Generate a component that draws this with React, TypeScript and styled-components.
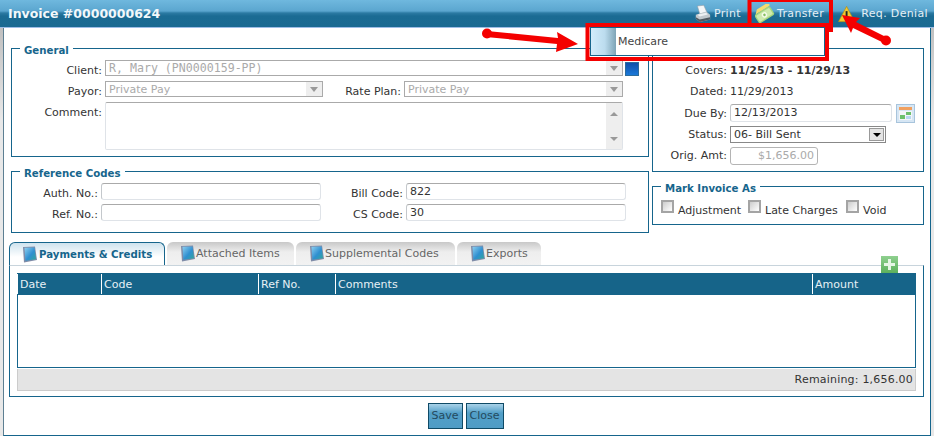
import React from "react";
import styled, { createGlobalStyle } from "styled-components";

const GlobalStyle = createGlobalStyle`
  html, body {
    margin: 0;
    padding: 0;
    background: #ffffff;
  }
  body {
    font-family: "DejaVu Sans", Verdana, sans-serif;
    font-size: 11px;
    color: #333333;
  }
`;

const TEAL = "#16658c";

const PrintIcon = () => (
  <svg width="20" height="22" viewBox="0 0 20 22">
    <path d="M3 1 L11 0 L15 9 L6 11 Z" fill="#f4f6f8" stroke="#8f9aa3" strokeWidth="0.7" />
    <path d="M1 12 L14 8 L19 12 L19 18 L6 21 L1 17 Z" fill="#c2c9ce" />
    <path d="M1 15 L6 18 L19 15 L19 18 L6 21 L1 17 Z" fill="#4f5961" />
    <path d="M3 12 L14 9.5 L16 11.5 L6 14 Z" fill="#eef1f3" />
  </svg>
);

const MoneyIcon = () => (
  <svg width="22" height="20" viewBox="0 0 22 20">
    <g transform="rotate(-32 11 10)">
      <path d="M2 5 L6 1 L22 1 L20 5 Z" fill="#f5dc70" />
      <rect x="0" y="5" width="20" height="11" rx="2" fill="#a6d67c" />
      <rect x="1.5" y="6.5" width="17" height="8" rx="1" fill="#cdeaae" />
      <circle cx="10" cy="10.5" r="3" fill="#f4fbe9" />
      <circle cx="10" cy="10.5" r="1.4" fill="#86bd61" />
    </g>
  </svg>
);

const WarningIcon = () => (
  <svg width="18" height="18" viewBox="0 0 18 18">
    <path d="M9 1 L17.5 17 L0.5 17 Z" fill="#f2c92e" stroke="#a98a1c" strokeWidth="0.7" />
    <rect x="8" y="6" width="2" height="6.5" fill="#222222" />
    <rect x="8" y="13.5" width="2" height="2" fill="#222222" />
  </svg>
);

const BookIcon = () => (
  <svg width="16" height="17" viewBox="0 0 16 17">
    <defs>
      <linearGradient id="bookFill" x1="0" y1="0" x2="1" y2="1">
        <stop offset="0" stopColor="#8fd0f0" />
        <stop offset="0.55" stopColor="#2f8fd0" />
        <stop offset="1" stopColor="#2fa89a" />
      </linearGradient>
    </defs>
    <path d="M1 1 L13 0.5 L15 14 L2 16.5 Z" fill="#7f8ca8" />
    <path d="M2.5 1.8 L12.5 1.4 L14 13.2 L3.4 14.8 Z" fill="url(#bookFill)" />
  </svg>
);

const CalendarIcon = () => (
  <svg width="19" height="19" viewBox="0 0 19 19">
    <rect x="0.5" y="0.5" width="18" height="18" fill="#d6e6f4" stroke="#a8c4dc" />
    <rect x="3" y="3" width="13" height="3" fill="#f0a060" />
    <rect x="3" y="7" width="13" height="9" fill="#f2f5f8" />
    <rect x="4" y="11" width="5" height="4" fill="#6cc06c" />
    <rect x="10" y="8" width="5" height="3" fill="#6cc06c" />
    <rect x="10" y="12" width="5" height="3" fill="#b8d8f0" />
  </svg>
);

const PlusIcon = () => (
  <svg width="17" height="17" viewBox="0 0 17 17">
    <defs>
      <linearGradient id="plusFill" x1="0" y1="0" x2="0" y2="1">
        <stop offset="0" stopColor="#8fd08f" />
        <stop offset="1" stopColor="#5cb05c" />
      </linearGradient>
    </defs>
    <rect width="17" height="17" fill="url(#plusFill)" />
    <rect x="7" y="3" width="3" height="11" fill="#e6f6e6" />
    <rect x="3" y="7" width="11" height="3" fill="#e6f6e6" />
  </svg>
);

const Annotations = () => (
  <Overlay width="934" height="436" viewBox="0 0 934 436">
    <g fill="none" stroke="#f40000" strokeWidth="4">
      <rect x="587.5" y="25" width="239.5" height="34" />
      <path d="M749.5 27 V0 H831 V32" />
    </g>
    <g fill="#f40000" stroke="none">
      <circle cx="487" cy="33.5" r="5" />
      <path d="M487 31 L558 38 L557 32 L578 44 L556 52 L557 44 L486 37 Z" />
      <circle cx="886" cy="40.5" r="5" />
      <path d="M888 38 L856 22 L860 18 L842 15 L851 33 L853 28 L884 43 Z" />
    </g>
  </Overlay>
);

const App: React.FC = () => (
  <Page>
    <GlobalStyle />
    <TitleBar>
      <Title>Invoice #0000000624</Title>
      <Toolbar>
        <ToolButton $width={46} $gap={3}>
          <PrintIcon />
          Print
        </ToolButton>
        <ToolButton $width={69} $gap={2}>
          <MoneyIcon />
          Transfer
        </ToolButton>
        <ToolButton $width={90} $gap={6}>
          <WarningIcon />
          Req. Denial
        </ToolButton>
      </Toolbar>
    </TitleBar>

    <Window>
      <TopGrid>
        <Column>
          <Group $height={118}>
            <Legend>General</Legend>
            <GeneralGrid>
              <Label>Client:</Label>
              <ClientCell>
                <Combo>
                  <ComboText $mono>R, Mary (PN0000159-PP)</ComboText>
                  <ComboArrow />
                </Combo>
              </ClientCell>
              <Swatch />
              <Label>Payor:</Label>
              <Combo>
                <ComboText>Private Pay</ComboText>
                <ComboArrow />
              </Combo>
              <Label>Rate Plan:</Label>
              <Combo>
                <ComboText>Private Pay</ComboText>
                <ComboArrow />
              </Combo>
              <span />
              <Label>Comment:</Label>
              <CommentBox>
                <CommentArea />
                <ScrollTrack>
                  <ScrollUp />
                  <ScrollDown />
                </ScrollTrack>
              </CommentBox>
            </GeneralGrid>
          </Group>

          <Group $height={71}>
            <Legend>Reference Codes</Legend>
            <CodesGrid>
              <Label>Auth. No.:</Label>
              <TextBox />
              <Label>Bill Code:</Label>
              <TextBox>822</TextBox>
              <Label>Ref. No.:</Label>
              <TextBox />
              <Label>CS Code:</Label>
              <TextBox>30</TextBox>
            </CodesGrid>
          </Group>
        </Column>

        <RightColumn>
          <InfoGroup>
            <InfoRow>
              <InfoLabel>Covers:</InfoLabel>
              <strong>11/25/13 - 11/29/13</strong>
            </InfoRow>
            <InfoRow>
              <InfoLabel>Dated:</InfoLabel>
              11/29/2013
            </InfoRow>
            <InfoRow>
              <InfoLabel>Due By:</InfoLabel>
              <DueBox>12/13/2013</DueBox>
              <CalendarSlot>
                <CalendarIcon />
              </CalendarSlot>
            </InfoRow>
            <InfoRow>
              <InfoLabel>Status:</InfoLabel>
              <StatusSelect>
                06- Bill Sent
                <StatusArrow />
              </StatusSelect>
            </InfoRow>
            <InfoRow>
              <InfoLabel>Orig. Amt:</InfoLabel>
              <AmountBox>$1,656.00</AmountBox>
            </InfoRow>
          </InfoGroup>

          <Group $height={48}>
            <Legend>Mark Invoice As</Legend>
            <MarkRow>
              <Check $width={87}>
                <CheckBox />
                Adjustment
              </Check>
              <Check $width={98}>
                <CheckBox />
                Late Charges
              </Check>
              <Check $width={50}>
                <CheckBox />
                Void
              </Check>
            </MarkRow>
          </Group>
        </RightColumn>
      </TopGrid>

      <TabSection>
        <TabStrip>
          <Tab $active $width={156}>
            <BookIcon />
            Payments &amp; Credits
          </Tab>
          <Tab $width={127}>
            <BookIcon />
            Attached Items
          </Tab>
          <Tab $width={159}>
            <BookIcon />
            Supplemental Codes
          </Tab>
          <Tab $width={84}>
            <BookIcon />
            Exports
          </Tab>
        </TabStrip>
        <TabPanel>
          <AddButton>
            <PlusIcon />
          </AddButton>
          <GridHeader>
            <HeaderCell>Date</HeaderCell>
            <HeaderCell>Code</HeaderCell>
            <HeaderCell>Ref No.</HeaderCell>
            <HeaderCell>Comments</HeaderCell>
            <HeaderCell>Amount</HeaderCell>
          </GridHeader>
          <GridBody />
          <GridFooter>Remaining: 1,656.00</GridFooter>
        </TabPanel>
      </TabSection>

      <Actions>
        <ActionButton $width={35}>Save</ActionButton>
        <ActionButton $width={38}>Close</ActionButton>
      </Actions>
    </Window>

    <PopupMenu>
      <PopupGutter />
      <PopupItem>Medicare</PopupItem>
    </PopupMenu>
    <Annotations />
  </Page>
);

const Page = styled.div`
  position: relative;
  width: 934px;
  height: 436px;
  overflow: hidden;
  background: linear-gradient(to bottom, #c0c0c0 28px, #e8e8e8 120px);
`;

const TitleBar = styled.header`
  height: 28px;
  box-sizing: border-box;
  display: flex;
  align-items: center;
  justify-content: space-between;
  padding: 0 6px 0 8px;
  background: linear-gradient(
    to bottom,
    #6fb8de 0,
    #5ba6cf 11px,
    #2c7aa3 13px,
    #1b6b93 16px,
    #1a6a92 100%
  );
  border-bottom: 1px solid #9dbde6;
`;

const Title = styled.h1`
  margin: 0;
  font-size: 12.5px;
  font-weight: bold;
  color: #f2f8fb;
`;

const Toolbar = styled.nav`
  display: flex;
  align-items: center;
  gap: 14px;
`;

const ToolButton = styled.div<{ $width: number; $gap: number }>`
  width: ${(p) => p.$width}px;
  display: flex;
  align-items: center;
  gap: ${(p) => p.$gap}px;
  letter-spacing: 0.35px;
  color: #e4f0f6;
  white-space: nowrap;
`;

const Window = styled.main`
  height: 408px;
  box-sizing: border-box;
  margin: 0 3px;
  background: #ffffff;
  border: 1px solid ${TEAL};
  border-top: none;
  border-left-color: #5d7f92;
`;

const TopGrid = styled.div`
  display: grid;
  grid-template-columns: 638px 272px;
  column-gap: 3px;
  padding: 11px 0 0 7px;
`;

const Column = styled.div`
  display: flex;
  flex-direction: column;
  gap: 5px;
`;

const RightColumn = styled(Column)`
  padding-top: 9px;
`;

const Group = styled.fieldset<{ $height: number }>`
  margin: 0;
  padding: 0;
  min-width: 0;
  height: ${(p) => p.$height}px;
  box-sizing: border-box;
  border: 1px solid ${TEAL};
`;

const Legend = styled.legend`
  margin-left: 8px;
  padding: 6px 4px 0;
  font-size: 10.2px;
  line-height: 12px;
  font-weight: bold;
  color: ${TEAL};
`;

const Label = styled.label`
  text-align: right;
  padding-right: 3px;
  color: #333333;
  white-space: nowrap;
`;

const GeneralGrid = styled.div`
  display: grid;
  grid-template-columns: 93px 218px 81px 219px 15px;
  grid-template-rows: 16px 16px 48px;
  row-gap: 5px;
  padding-top: 3px;
  align-items: start;
  ${Label} {
    padding-top: 4px;
  }
`;

const ClientCell = styled.div`
  grid-column: span 3;
`;

const Combo = styled.div`
  height: 16px;
  box-sizing: border-box;
  display: flex;
  align-items: center;
  justify-content: space-between;
  border: 1px solid #aaaaaa;
  background: #ffffff;
`;

const ComboText = styled.span<{ $mono?: boolean }>`
  padding-left: 3px;
  font-family: ${(p) =>
    p.$mono ? `"DejaVu Sans Mono", monospace` : `"DejaVu Sans", sans-serif`};
  font-size: ${(p) => (p.$mono ? "11.6px" : "11px")};
  color: #aaaaaa;
`;

const ComboArrow = styled.span`
  width: 16px;
  height: 14px;
  display: flex;
  align-items: center;
  justify-content: center;
  background: #eeeeee;
  &::after {
    content: "";
    border-left: 4px solid transparent;
    border-right: 4px solid transparent;
    border-top: 5px solid #999999;
  }
`;

const Swatch = styled.span`
  width: 14px;
  height: 14px;
  margin: 2px 0 0 2px;
  background: linear-gradient(to bottom, #0f4fa8, #1a78d8);
  border: 1px solid #2c6c9c;
  box-sizing: border-box;
`;

const CommentBox = styled.div`
  grid-column: span 3;
  height: 48px;
  box-sizing: border-box;
  display: flex;
  border: 1px solid #dfe3e8;
  border-top-color: #aaaaaa;
  border-radius: 2px;
`;

const CommentArea = styled.div`
  flex: 1;
`;

const ScrollTrack = styled.div`
  width: 16px;
  display: flex;
  flex-direction: column;
  justify-content: space-between;
  align-items: center;
  padding: 9px 0 8px;
  box-sizing: border-box;
  background: #eeeeee;
`;

const ScrollUp = styled.span`
  border-left: 4px solid transparent;
  border-right: 4px solid transparent;
  border-bottom: 4px solid #999999;
`;

const ScrollDown = styled.span`
  border-left: 4px solid transparent;
  border-right: 4px solid transparent;
  border-top: 4px solid #999999;
`;

const CodesGrid = styled.div`
  display: grid;
  grid-template-columns: 89px 220px 85px 220px;
  grid-auto-rows: 17px;
  row-gap: 4px;
  padding-top: 3px;
  align-items: center;
  ${Label} {
    padding-top: 3px;
  }
`;

const TextBox = styled.div`
  height: 17px;
  line-height: 15px;
  box-sizing: border-box;
  padding-left: 3px;
  border: 1px solid #dfe3e8;
  border-top-color: #aaaaaa;
  border-left-color: #c4c8cc;
  border-radius: 3px;
  color: #333333;
`;

const InfoGroup = styled.fieldset`
  margin: 0;
  padding: 11px 0 0;
  min-width: 0;
  height: 124px;
  box-sizing: border-box;
  border: 1px solid ${TEAL};
  display: flex;
  flex-direction: column;
`;

const InfoRow = styled.div`
  height: 21px;
  flex: none;
  display: flex;
  align-items: center;
  white-space: nowrap;
  &:nth-child(3) {
    height: 22px;
  }
`;

const InfoLabel = styled.span`
  width: 74px;
  margin-right: 3px;
  flex: none;
  text-align: right;
`;

const DueBox = styled(TextBox)`
  width: 162px;
  height: 18px;
  line-height: 16px;
`;

const CalendarSlot = styled.span`
  margin-left: 4px;
  display: flex;
`;

const StatusSelect = styled.div`
  width: 156px;
  height: 17px;
  box-sizing: border-box;
  display: flex;
  align-items: center;
  justify-content: space-between;
  padding-left: 3px;
  border: 1px solid #888888;
`;

const StatusArrow = styled.span`
  width: 15px;
  height: 13px;
  margin-right: 1px;
  display: flex;
  align-items: center;
  justify-content: center;
  background: #e4e4e4;
  border: 1px solid #999999;
  box-sizing: border-box;
  &::after {
    content: "";
    border-left: 4px solid transparent;
    border-right: 4px solid transparent;
    border-top: 4px solid #000000;
  }
`;

const AmountBox = styled(TextBox)`
  width: 88px;
  height: 18px;
  line-height: 16px;
  padding: 0 3px 0 0;
  text-align: right;
  color: #aaaaaa;
  border-color: #b4b4b4;
`;

const MarkRow = styled.div`
  display: flex;
  padding: 5px 0 0 8px;
`;

const Check = styled.label<{ $width: number }>`
  width: ${(p) => p.$width}px;
  display: flex;
  gap: 4px;
  line-height: 22px;
  height: 20px;
  white-space: nowrap;
`;

const CheckBox = styled.span`
  width: 13px;
  height: 13px;
  flex: none;
  box-sizing: border-box;
  border: 2px solid #a4a4a4;
  background: linear-gradient(135deg, #cccccc, #ffffff);
`;

const TabSection = styled.section`
  margin: 9px 6px 0 5px;
`;

const TabStrip = styled.div`
  height: 23px;
  display: flex;
  align-items: flex-end;
  gap: 2px;
`;

const Tab = styled.div<{ $active?: boolean; $width: number }>`
  width: ${(p) => p.$width}px;
  height: 23px;
  box-sizing: border-box;
  display: flex;
  align-items: center;
  gap: 0;
  padding: 0 0 0 13px;
  white-space: nowrap;
  border-radius: 6px 6px 0 0;
  ${(p) =>
    p.$active
      ? `
    font-weight: bold;
    font-size: 10.2px;
    gap: 1px;
    color: ${TEAL};
    height: 24px;
    margin-bottom: -1px;
    position: relative;
    background: linear-gradient(to bottom, #cfe3ee, #ffffff 14px);
    border: 1px solid ${TEAL};
    border-bottom: none;
    padding-left: 12px;
  `
      : `
    color: #666666;
    background: linear-gradient(to bottom, #c8c8c8, #eeeeee 10px, #f2f2f2);
  `}
`;

const TabPanel = styled.div`
  position: relative;
  height: 132px;
  box-sizing: border-box;
  padding: 7px 7px 0;
  border: 1px solid ${TEAL};
  border-top-color: #c8d4dc;
`;

const AddButton = styled.span`
  position: absolute;
  top: -10px;
  right: 25px;
  display: flex;
`;

const GridHeader = styled.div`
  height: 22px;
  box-sizing: border-box;
  display: grid;
  grid-template-columns: 84px 157px 77px 477px 1fr;
  align-items: center;
  padding: 1px 0;
  background: #166489;
`;

const HeaderCell = styled.div`
  height: 20px;
  line-height: 21px;
  box-sizing: border-box;
  padding-left: 2px;
  border-left: 1px solid #ffffff;
  color: #e6f0f5;
`;

const GridBody = styled.div`
  height: 73px;
  box-sizing: border-box;
  border: 1px solid ${TEAL};
  border-top: none;
`;

const GridFooter = styled.div`
  height: 22px;
  line-height: 21px;
  margin-top: 1px;
  box-sizing: border-box;
  padding-right: 2px;
  text-align: right;
  letter-spacing: 0.2px;
  background: #e4e4e4;
  border: 1px solid #cccccc;
  border-top: none;
  color: #333333;
`;

const Actions = styled.div`
  display: flex;
  justify-content: center;
  gap: 3px;
  padding: 6px 3px 0 0;
`;

const ActionButton = styled.div<{ $width: number }>`
  width: ${(p) => p.$width}px;
  height: 26px;
  line-height: 24px;
  box-sizing: border-box;
  text-align: center;
  color: #244a5e;
  border: 1px solid #0f4a66;
  background: linear-gradient(to bottom, #a9d2e8, #529fc8 9px, #4f9cc5);
`;

const PopupMenu = styled.div`
  position: absolute;
  left: 590px;
  top: 27px;
  width: 235px;
  height: 29px;
  box-sizing: border-box;
  display: flex;
  border: 1px solid ${TEAL};
  background: #ffffff;
`;

const PopupGutter = styled.span`
  width: 25px;
  background: linear-gradient(to right, #d2ecfb, #bcdcee 55%, #7ea4b6);
`;

const PopupItem = styled.span`
  padding-left: 2px;
  line-height: 27px;
  color: #444444;
`;

const Overlay = styled.svg`
  position: absolute;
  left: 0;
  top: 0;
  pointer-events: none;
`;

export default App;
